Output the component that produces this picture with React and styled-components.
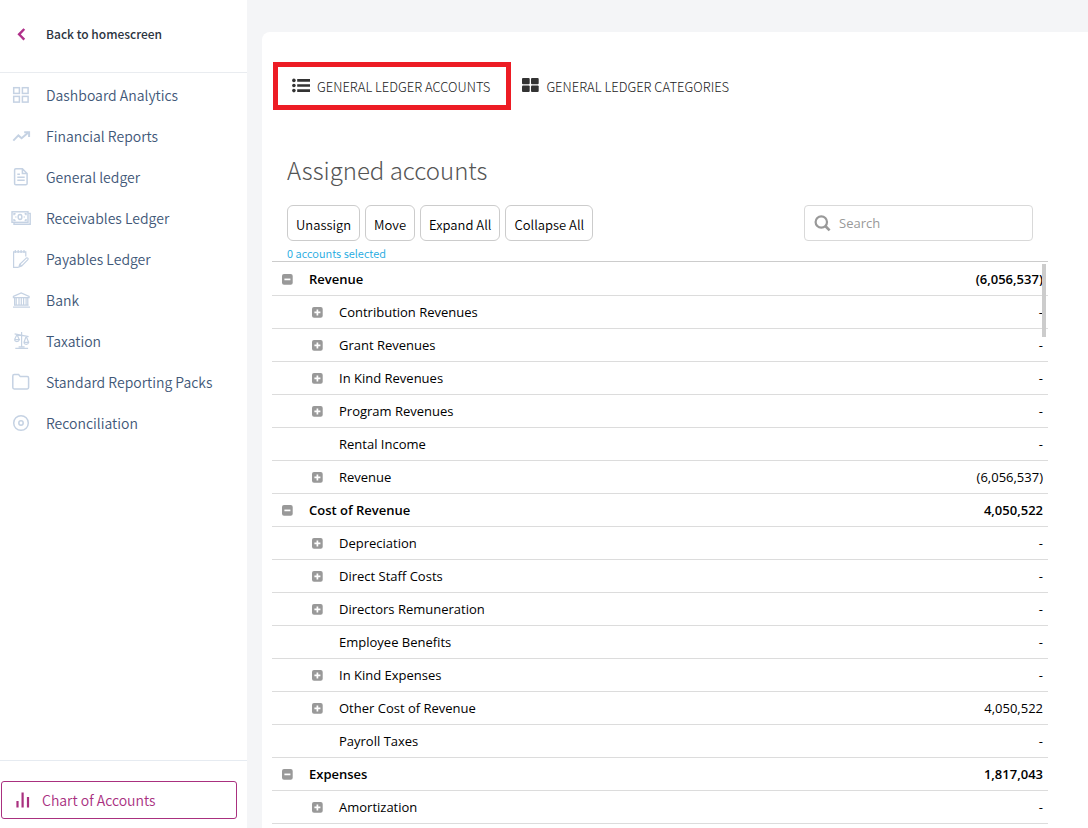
import React, { useState } from "react";
import styled, { createGlobalStyle, css } from "styled-components";

const sourceSans = '"Noto Sans CJK SC", "Noto Sans", sans-serif';
const uiSans = '"Open Sans", "Noto Sans", sans-serif';

const GlobalStyle = createGlobalStyle`
  *, *::before, *::after { box-sizing: border-box; }
  body { margin: 0; background: #f4f5f7; font-family: ${sourceSans}; }
  button, input { font: inherit; }
`;

const Page = styled.div`
  display: flex;
  height: 100vh;
  overflow: hidden;
`;

const Sidebar = styled.aside`
  flex: 0 0 247px;
  display: flex;
  flex-direction: column;
  background: #fff;
`;

const BackLink = styled.a`
  display: flex;
  align-items: center;
  gap: 15px;
  height: 73px;
  padding: 0 11px 5px;
  border-bottom: 1px solid #e9ecf0;
  color: #2c3440;
  font-size: 12px;
  font-weight: 500;
  text-decoration: none;
`;

const Nav = styled.nav`
  flex: 1;
  padding-top: 2px;
`;

const NavLink = styled.a`
  display: flex;
  align-items: center;
  gap: 15px;
  height: 41px;
  padding: 0 11px 1px;
  color: #3f5878;
  font-size: 14px;
  font-weight: 350;
  line-height: 20px;
  text-decoration: none;
  svg { color: #c5d2e3; }
`;

const Icon = styled.svg`
  flex: none;
  width: 20px;
  height: 20px;
  fill: none;
  stroke: currentColor;
  stroke-width: 1.5;
`;

const SidebarFooter = styled.div`
  padding: 20px 10px 9px 1px;
  border-top: 1px solid #e6ebf1;
`;

const ActiveLink = styled.a`
  display: flex;
  align-items: center;
  gap: 9px;
  height: 38px;
  padding: 0 11px;
  border: 1px solid #a9307f;
  border-radius: 3px;
  color: #a9307f;
  font-size: 14px;
  font-weight: 350;
  text-decoration: none;
`;

const Panel = styled.main`
  flex: 1;
  min-width: 0;
  margin: 32px 0 0 15px;
  padding: 30px 40px 0 10px;
  background: #fff;
  border-radius: 8px 0 0 0;
`;

const Tabs = styled.div`
  display: flex;
  padding-left: 1px;
`;

const Tab = styled.button`
  display: flex;
  align-items: center;
  gap: 7px;
  height: 48px;
  padding: 0 16px 0 14px;
  border: 5px solid transparent;
  background: none;
  color: #222;
  font-size: 13px;
  font-weight: 300;
  ${(p) => p.$active && css`border-color: #ed1c24;`}
  ${(p) => !p.$active && css`padding-left: 5px;`}
`;

const TabIcon = styled.svg`
  width: 18px;
  height: 18px;
  fill: #333;
`;

const Title = styled.h1`
  margin: 40px 0 15px 15px;
  color: #555;
  font-size: 24px;
  font-weight: 300;
  line-height: 40px;
`;

const Toolbar = styled.div`
  display: flex;
  gap: 5px;
  padding: 0 15px;
`;

const ToolButton = styled.button`
  height: 36px;
  padding: 2px 8px 0;
  border: 1px solid #ccc;
  border-radius: 6px;
  background: #fff;
  color: #000;
  font-size: 13px;
  font-weight: 350;
`;

const SearchBox = styled.label`
  display: flex;
  align-items: center;
  gap: 8px;
  width: 229px;
  height: 36px;
  margin-left: auto;
  padding: 0 9px;
  border: 1px solid #d9d9d9;
  border-radius: 4px;
  color: #999;
  input {
    flex: 1;
    min-width: 0;
    padding: 0;
    border: 0;
    outline: 0;
    font-family: ${uiSans};
    font-size: 13px;
  }
  input::placeholder { color: #999; opacity: 1; }
`;

const Selected = styled.p`
  margin: 4px 15px 0;
  color: #1caadf;
  font-size: 11px;
  font-weight: 350;
  line-height: 16px;
`;

const TableArea = styled.div`
  position: relative;
`;

const ScrollThumb = styled.span`
  position: absolute;
  top: 3px;
  right: 2px;
  width: 4px;
  height: 73px;
  background: #ccc;
`;

const Table = styled.table`
  width: 100%;
  padding-top: 1px;
  border-collapse: separate;
  border-spacing: 0;
  border-top: 1px solid #ccc;
  font-family: ${uiSans};
  font-size: 13px;
  line-height: 18px;
`;

const Row = styled.tr`
  color: #000;
  font-weight: ${(p) => (p.$group ? 600 : 400)};
`;

const cell = css`
  height: 33px;
  padding: 0 5px 0 10px;
  border-bottom: 1px solid #dcdcdc;
  font-weight: inherit;
`;

const NameCell = styled.th`
  ${cell}
  padding-left: ${(p) => (p.$group ? 10 : 40)}px;
  text-align: left;
`;

const AmountCell = styled.td`
  ${cell}
  text-align: right;
`;

const NameLayout = styled.div`
  display: grid;
  grid-template-columns: 11px 1fr;
  align-items: center;
  gap: 16px;
`;

const Toggle = styled.button`
  grid-column: 1;
  display: flex;
  padding: 1px 0 0;
  border: 0;
  background: none;
  color: #999;
`;

const Label = styled.span`
  grid-column: 2;
`;

const navItems = [
  ["Dashboard Analytics", <><rect x="2.7" y="2.7" width="5.7" height="5.7" /><rect x="11.4" y="2.7" width="5.7" height="5.7" /><rect x="2.7" y="11.4" width="5.7" height="5.7" /><rect x="11.4" y="11.4" width="5.7" height="5.7" /></>],
  ["Financial Reports", <g strokeWidth="2"><path d="M2.3 14.6 7.4 9.4l3.2 2.8 7-6" /><path d="M13.2 6.2h4.9v4.7" /></g>],
  ["General ledger", <g strokeWidth="1.5"><path d="M11.4 1.8H4.9q-1.3 0-1.3 1.3v13.3q0 1.3 1.3 1.3h9.9q1.3 0 1.3-1.3V6.5zM11.4 1.8v4.7h4.7M6.3 7.2h2.6M6.3 10.2h7.4M6.3 13.3h7.4" /></g>],
  ["Receivables Ledger", <g strokeWidth="1.4"><rect x="1" y="3.8" width="16" height="10.5" /><path d="M17.2 5.4h2v10.8H3v-1.8" /><ellipse cx="9" cy="9" rx="1.9" ry="2.5" /><path d="M3 7.2V5.7h1.6M13.6 5.7H15v1.5M3 11v1.5h1.6M13.6 12.5H15V11M4.4 9h1M12.7 9h1" /></g>],
  ["Payables Ledger", <g strokeWidth="1.2"><path d="M14.8 7.6V2.8H2.6v15.6h4.6M4.3 1v3M7.2 1v3M10.1 1v3M13 1v3" /><path d="m8.8 15.2 6.4-6.1q.9-.6 1.6.1t.1 1.5l-6.2 6.2-2.8 1zM8.8 15.2l1.9 1.7" /></g>],
  ["Bank", <g strokeWidth="1.2"><path d="M2.4 6.4 10.2 3l7.9 3.4v1.3H2.4zM3.6 8v7M5.2 8v7M8 8v7M10.3 8v7M12.6 8v7M15.1 8v7M16.8 8v7M3 15.2h14.6M2 17.2h17" /></g>],
  ["Taxation", <g strokeWidth="1.2"><path d="M10.6 1v15.5M3.6 2.8 17.6 5.6M6 3.4 3.6 8.6M6 3.4l2.2 5.2M15.2 5.3l-2.2 6M15.2 5.3l2.4 6M3.4 8.7h5q-.5 2-2.5 2t-2.5-2M12.7 11.3h5q-.5 2-2.5 2t-2.5-2M7.6 15.8h6M4.3 17.4h12.8" /></g>],
  ["Standard Reporting Packs", <path d="M1.8 4v11.5q0 1.4 1.4 1.4h13q1.4 0 1.4-1.4V6q0-1.4-1.4-1.4H9.3L7.6 2.5H3.2Q1.8 2.5 1.8 4z" />],
  ["Reconciliation", <><circle cx="10" cy="10" r="7.3" /><circle cx="10" cy="10" r="2.2" /></>],
];

const groups = [
  { name: "Revenue", amount: "(6,056,537)", rows: [
    ["Contribution Revenues", "-", true],
    ["Grant Revenues", "-", true],
    ["In Kind Revenues", "-", true],
    ["Program Revenues", "-", true],
    ["Rental Income", "-", false],
    ["Revenue", "(6,056,537)", true],
  ] },
  { name: "Cost of Revenue", amount: "4,050,522", rows: [
    ["Depreciation", "-", true],
    ["Direct Staff Costs", "-", true],
    ["Directors Remuneration", "-", true],
    ["Employee Benefits", "-", false],
    ["In Kind Expenses", "-", true],
    ["Other Cost of Revenue", "4,050,522", true],
    ["Payroll Taxes", "-", false],
  ] },
  { name: "Expenses", amount: "1,817,043", rows: [
    ["Amortization", "-", true],
  ] },
];

function ToggleIcon({ open }) {
  return (
    <svg width="11" height="11" viewBox="0 0 11 11" aria-hidden="true">
      <rect width="10.7" height="10.7" rx="2" fill="currentColor" />
      <path d={open ? "M2.4 5.4h6" : "M2.4 5.4h6M5.4 2.4v6"} stroke="#fff" strokeWidth="1.7" />
    </svg>
  );
}

function AccountRow({ name, amount, group, expandable, open, onToggle }) {
  return (
    <Row $group={group}>
      <NameCell scope="row" $group={group}>
        <NameLayout>
          {expandable && (
            <Toggle type="button" aria-label={`${open ? "Collapse" : "Expand"} ${name}`} onClick={onToggle}>
              <ToggleIcon open={open} />
            </Toggle>
          )}
          <Label>{name}</Label>
        </NameLayout>
      </NameCell>
      <AmountCell>{amount}</AmountCell>
    </Row>
  );
}

export default function App() {
  const [closed, setClosed] = useState({});
  const setAll = (value) => setClosed(Object.fromEntries(groups.map((g) => [g.name, value])));

  return (
    <Page>
      <GlobalStyle />
      <Sidebar>
        <BackLink href="#home">
          <Icon viewBox="0 0 20 20" aria-hidden="true" color="#b0308a">
            <path d="m13.3 5-5.2 5.3 5.2 5.3" strokeWidth="2.4" />
          </Icon>
          Back to homescreen
        </BackLink>
        <Nav>
          {navItems.map(([label, drawing]) => (
            <NavLink href="#" key={label}>
              <Icon viewBox="0 0 20 20" aria-hidden="true">{drawing}</Icon>
              {label}
            </NavLink>
          ))}
        </Nav>
        <SidebarFooter>
          <ActiveLink href="#accounts">
            <Icon viewBox="0 0 20 20" aria-hidden="true">
              <path d="M4.5 11v6.5M9.6 2.5v15M15 7v10.5" strokeWidth="2.2" />
            </Icon>
            Chart of Accounts
          </ActiveLink>
        </SidebarFooter>
      </Sidebar>
      <Panel>
        <Tabs>
          <Tab type="button" $active>
            <TabIcon viewBox="0 0 18 18" aria-hidden="true">
              <circle cx="1.9" cy="3.4" r="1.8" /><circle cx="1.9" cy="8.5" r="1.8" /><circle cx="1.9" cy="13.6" r="1.8" />
              <path d="M5.2 2.1H18v2.6H5.2zM5.2 7.2H18v2.6H5.2zM5.2 12.3H18v2.6H5.2z" />
            </TabIcon>
            GENERAL LEDGER ACCOUNTS
          </Tab>
          <Tab type="button">
            <TabIcon viewBox="0 0 18 18" aria-hidden="true">
              <rect x="1" y="1" width="7.7" height="6.3" rx="1" /><rect x="10" y="1" width="7.7" height="6.3" rx="1" />
              <rect x="1" y="8.6" width="7.7" height="6.3" rx="1" /><rect x="10" y="8.6" width="7.7" height="6.3" rx="1" />
            </TabIcon>
            GENERAL LEDGER CATEGORIES
          </Tab>
        </Tabs>
        <Title>Assigned accounts</Title>
        <Toolbar>
          <ToolButton type="button">Unassign</ToolButton>
          <ToolButton type="button">Move</ToolButton>
          <ToolButton type="button" onClick={() => setAll(false)}>Expand All</ToolButton>
          <ToolButton type="button" onClick={() => setAll(true)}>Collapse All</ToolButton>
          <SearchBox>
            <svg width="17" height="17" viewBox="0 0 17 17" fill="none" stroke="currentColor" aria-hidden="true">
              <circle cx="7.3" cy="7" r="5.7" strokeWidth="2.2" />
              <path d="m11.3 11 4.3 4.4" strokeWidth="2.6" />
            </svg>
            <input type="text" placeholder="Search" aria-label="Search" />
          </SearchBox>
        </Toolbar>
        <Selected>0 accounts selected</Selected>
        <TableArea>
          <Table>
            <tbody>
              {groups.map((g) => (
                <React.Fragment key={g.name}>
                  <AccountRow
                    name={g.name}
                    amount={g.amount}
                    group
                    expandable
                    open={!closed[g.name]}
                    onToggle={() => setClosed({ ...closed, [g.name]: !closed[g.name] })}
                  />
                  {!closed[g.name] && g.rows.map(([name, amount, expandable]) => (
                    <AccountRow key={name} name={name} amount={amount} expandable={expandable} />
                  ))}
                </React.Fragment>
              ))}
            </tbody>
          </Table>
          <ScrollThumb />
        </TableArea>
      </Panel>
    </Page>
  );
}
